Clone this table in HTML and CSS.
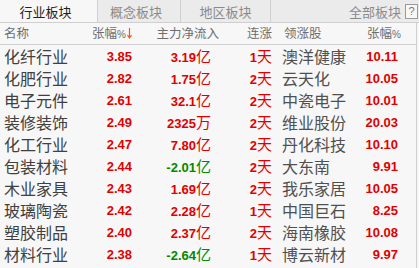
FILE: index.html
```html
<!DOCTYPE html>
<html lang="zh">
<head>
<meta charset="utf-8">
<link rel="stylesheet" href="styles.css">
</head>
<body>
<div class="panel">
  <div class="tabs">
    <div class="tab active">行业板块</div>
    <div class="tab t2">概念板块</div>
    <div class="tab t3">地区板块</div>
    <div class="tab-fill">
      <span class="all">全部板块</span>
      <span class="help">?</span>
    </div>
  </div>
  <div class="table">
    <div class="row head">
      <span class="c1">名称</span>
      <span class="c2">张幅<i class="pct">%</i><svg class="arrow" width="5" height="11" viewBox="0 0 5 11"><path d="M2.5 0 V10 M0.5 7 L2.5 10 L4.5 7" stroke="#f05a1a" stroke-width="1.2" fill="none"/></svg></span>
      <span class="c3">主力净流入</span>
      <span class="c4">连涨</span>
      <span class="c5">领涨股</span>
      <span class="c6">张幅<i class="pct">%</i></span>
    </div>
    <div class="row"><span class="c1">化纤行业</span><span class="c2 up num">3.85</span><span class="c3 up"><b>3.19</b>亿</span><span class="c4 up"><b>1</b>天</span><span class="c5">澳洋健康</span><span class="c6 up num">10.11</span></div>
    <div class="row"><span class="c1">化肥行业</span><span class="c2 up num">2.82</span><span class="c3 up"><b>1.75</b>亿</span><span class="c4 up"><b>2</b>天</span><span class="c5">云天化</span><span class="c6 up num">10.05</span></div>
    <div class="row"><span class="c1">电子元件</span><span class="c2 up num">2.61</span><span class="c3 up"><b>32.1</b>亿</span><span class="c4 up"><b>2</b>天</span><span class="c5">中瓷电子</span><span class="c6 up num">10.01</span></div>
    <div class="row"><span class="c1">装修装饰</span><span class="c2 up num">2.49</span><span class="c3 up"><b>2325</b>万</span><span class="c4 up"><b>2</b>天</span><span class="c5">维业股份</span><span class="c6 up num">20.03</span></div>
    <div class="row"><span class="c1">化工行业</span><span class="c2 up num">2.47</span><span class="c3 up"><b>7.80</b>亿</span><span class="c4 up"><b>2</b>天</span><span class="c5">丹化科技</span><span class="c6 up num">10.10</span></div>
    <div class="row"><span class="c1">包装材料</span><span class="c2 up num">2.44</span><span class="c3 down"><b>-2.01</b>亿</span><span class="c4 up"><b>2</b>天</span><span class="c5">大东南</span><span class="c6 up num">9.91</span></div>
    <div class="row"><span class="c1">木业家具</span><span class="c2 up num">2.43</span><span class="c3 up"><b>1.69</b>亿</span><span class="c4 up"><b>2</b>天</span><span class="c5">我乐家居</span><span class="c6 up num">10.05</span></div>
    <div class="row"><span class="c1">玻璃陶瓷</span><span class="c2 up num">2.42</span><span class="c3 up"><b>2.28</b>亿</span><span class="c4 up"><b>1</b>天</span><span class="c5">中国巨石</span><span class="c6 up num">8.25</span></div>
    <div class="row"><span class="c1">塑胶制品</span><span class="c2 up num">2.40</span><span class="c3 up"><b>2.37</b>亿</span><span class="c4 up"><b>2</b>天</span><span class="c5">海南橡胶</span><span class="c6 up num">10.08</span></div>
    <div class="row"><span class="c1">材料行业</span><span class="c2 up num">2.38</span><span class="c3 down"><b>-2.64</b>亿</span><span class="c4 up"><b>1</b>天</span><span class="c5">博云新材</span><span class="c6 up num">9.97</span></div>
  </div>
</div>
</body>
</html>
```
FILE: styles.css
```css
* { box-sizing: border-box; }
html, body { margin: 0; padding: 0; }
body {
  width: 419px;
  height: 268px;
  overflow: hidden;
  background: #f7f7f7;
  font-family: "Noto Sans CJK SC", "Liberation Sans", sans-serif;
  color: #404040;
}
.panel { width: 419px; height: 268px; }
.tabs {
  display: flex;
  height: 23px;
  border-bottom: 1px solid #cfcfcf;
  background: #ebebeb;
}
.tab {
  display: flex;
  align-items: center;
  justify-content: center;
  font-size: 13px;
  color: #8a8a8a;
  border-right: 1px solid #cfcfcf;
  height: 22px;
  line-height: 1;
}
.tab.active {
  width: 98px;
  background: #f7f7f7;
  color: #222;
  padding-right: 6px;
}
.tab.t2 { width: 83px; padding-right: 6px; }
.tab.t3 { width: 90px; }
.tab-fill {
  flex: 1;
  display: flex;
  align-items: center;
  justify-content: flex-end;
  padding-right: 1px;
  gap: 4px;
}
.all { font-size: 13px; color: #8a8a8a; line-height: 1; }
.help {
  width: 13px;
  height: 15px;
  border: 1px solid #9a9a9a;
  font-family: "Liberation Sans", sans-serif;
  font-size: 11px;
  color: #777;
  display: flex;
  align-items: center;
  justify-content: center;
  background: #f7f7f7;
}
.table {
  border-right: 1px solid #d0d0d0;
  width: 417px;
  height: 245px;
}
.row {
  display: grid;
  grid-template-columns: 88px 40px 79px 61px 83px 43px;
  padding-left: 4px;
  height: 22px;
  align-items: center;
  white-space: nowrap;
  font-size: 16px;
  line-height: 1;
}
.c2, .c3, .c4, .c6 { text-align: right; }
.c3, .c4 { font-size: 15px; }
.c5 { padding-left: 10px; color: #505050; }
.c1 { color: #404040; }
.row.head {
  border-bottom: 1px solid #cfcfcf;
  font-size: 12.5px;
  color: #6e6e6e;
}
.head span { font-size: 12.5px; color: #6e6e6e; }
.head .c3 { margin-right: -8px; }
.head .c5 { padding-left: 12px; }
.head .c6 { margin-right: -3px; }
.pct {
  font-style: normal;
  font-family: "Liberation Sans", sans-serif;
  font-size: 10px;
}
.arrow { vertical-align: -1px; margin-left: 1px; }
.num, b {
  font-family: "Liberation Sans", sans-serif;
  font-weight: bold;
  font-size: 13px;
}
.up { color: #e00000; }
.down { color: #008a00; }
```
